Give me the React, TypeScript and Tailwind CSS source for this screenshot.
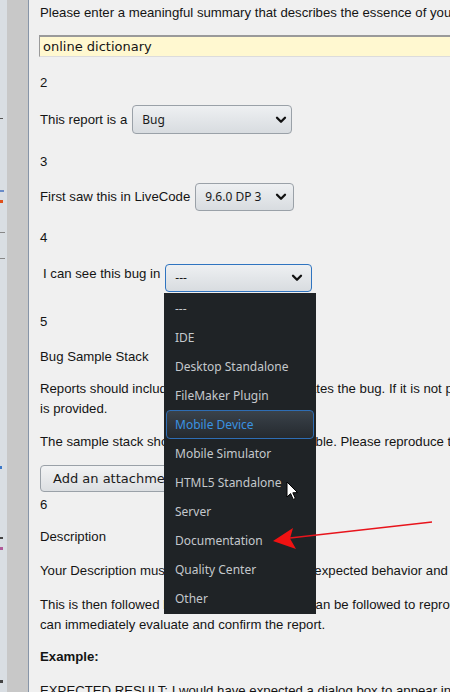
import clsx from 'clsx'

const items = [
  '---',
  'IDE',
  'Desktop Standalone',
  'FileMaker Plugin',
  'Mobile Device',
  'Mobile Simulator',
  'HTML5 Standalone',
  'Server',
  'Documentation',
  'Quality Center',
  'Other',
]

function Chevron() {
  return (
    <svg width="12" height="8" viewBox="0 0 12 8" className="shrink-0">
      <path d="M2 1.8 L6 5.8 L10 1.8" fill="none" stroke="#111" strokeWidth="2.3" strokeLinecap="round" strokeLinejoin="round" />
    </svg>
  )
}

function Select({ value, className, focused }: { value: string; className: string; focused?: boolean }) {
  return (
    <div
      className={clsx(
        'flex shrink-0 items-center justify-between rounded-[4px] border bg-gradient-to-b from-[#eef0f2] to-[#d8dce0] pl-[9px] font-["Noto_Sans",sans-serif] text-[12px] text-[#1a1a1a]',
        focused ? 'border-[#2f74c0]' : 'border-[#9aa1a8]',
        className,
      )}
    >
      <span>{value}</span>
      <Chevron />
    </div>
  )
}

export default function App() {
  return (
    <div className="relative flex h-[692px] w-[450px] overflow-hidden bg-[#f0f0f0]">
      {/* window behind */}
      <div className="relative w-[7px] shrink-0 bg-[#d9dee3]">
        <div className="absolute left-0 top-[118px] h-px w-[3px] bg-[#555]" />
        <div className="absolute left-0 top-[190px] h-[2px] w-[4px] bg-[#6a8cc8]" />
        <div className="absolute left-0 top-[200px] h-[3px] w-[3px] bg-[#e0501a]" />
        <div className="absolute left-0 top-[232px] h-px w-[5px] bg-[#888]" />
        <div className="absolute left-0 top-[258px] h-px w-[5px] bg-[#888]" />
        <div className="absolute left-0 top-[466px] h-[3px] w-[2px] bg-[#3c78c8]" />
        <div className="absolute left-0 top-[537px] h-[2px] w-[3px] bg-[#444]" />
        <div className="absolute left-0 top-[547px] h-[3px] w-[3px] bg-[#b05a9a]" />
        <div className="absolute left-0 top-[680px] h-[3px] w-[3px] bg-[#444]" />
      </div>
      <div className="w-[21px] shrink-0 bg-[#c8c8c8]" />
      <div className="w-px shrink-0 bg-[#8795a8]" />

      <div className='flex min-w-0 flex-1 flex-col pl-[11px] font-["Liberation_Sans",Arial,sans-serif] text-[13.2px] leading-[20px] text-[#141414]'>
        <p className="mt-[3px] whitespace-nowrap">Please enter a meaningful summary that describes the essence of your report.</p>
        <div className='-ml-px mt-[12px] flex h-[22px] w-[560px] shrink-0 items-center border-t-2 border-l border-b border-[#9a9a9a] border-b-[#dcdcdc] bg-[#fff8d0] pl-[3px] font-["DejaVu_Sans",sans-serif] text-[13px]'>
          online dictionary
        </div>
        <p className="mt-[16px]">2</p>
        <div className="mt-[12px] flex items-center gap-[5px] whitespace-nowrap">
          <span>This report is a</span>
          <Select value="Bug" className="h-[29px] w-[160px] pr-[4px]" />
        </div>
        <p className="mt-[18px]">3</p>
        <div className="mt-[11px] flex items-center gap-[5px] whitespace-nowrap">
          <span>First saw this in LiveCode</span>
          <Select value="9.6.0 DP 3" className="h-[28px] w-[99px] pr-[6px]" />
        </div>
        <p className="mt-[17px]">4</p>
        <div className="mt-[16px] flex items-start gap-[5px] whitespace-nowrap pl-[3px]">
          <span>I can see this bug in</span>
          <Select value="---" focused className="h-[28px] w-[147px] pr-[8px]" />
        </div>
        <p className="mt-[20px]">5</p>
        <p className="mt-[15px]">Bug Sample Stack</p>
        <p className="mt-[12px] whitespace-nowrap">
          Reports should include a recipe that demonstrates the bug. If it is not possible to provide one, please explain why no stack
          <br />
          is provided.
        </p>
        <p className="mt-[13px] whitespace-nowrap">The sample stack should be as simple as possible. Please reproduce the bug in a new stack.</p>
        <div className='mt-[13px] flex h-[27px] w-[150px] shrink-0 items-center rounded-[4px] border border-[#9aa1a8] bg-gradient-to-b from-[#f2f3f4] to-[#dcdfe2] pl-[12px] font-["DejaVu_Sans",sans-serif] text-[13px] text-[#1a1a1a]'>
          Add an attachment
        </div>
        <p className="mt-[3px]">6</p>
        <p className="mt-[12px]">Description</p>
        <p className="mt-[14px] whitespace-nowrap">Your Description must start with describing the expected behavior and the actual behavior.</p>
        <p className="mt-[14px] whitespace-nowrap">
          This is then followed by a list of the steps that can be followed to reproduce the bug so that the team
          <br />
          can immediately evaluate and confirm the report.
        </p>
        <p className="mt-[12px] font-bold">Example:</p>
        <p className="mt-[14px] whitespace-nowrap">EXPECTED RESULT: I would have expected a dialog box to appear in the centre of the screen.</p>
      </div>

      {/* open select popup */}
      <div className='absolute left-[164px] top-[293px] flex h-[321px] w-[152px] flex-col bg-[#1f2326] pt-[1px] font-["Noto_Sans",sans-serif] text-[12px] text-[#c4c8cc]'>
        {items.map((it, i) =>
          i === 4 ? (
            <div
              key={it}
              className="mx-[2px] flex h-[29px] shrink-0 items-center rounded-[4px] border border-[#2e6db4] bg-gradient-to-b from-[#3a424a] to-[#252a2f] pl-[8px] text-[#3a92e0]"
            >
              {it}
            </div>
          ) : (
            <div key={it} className="flex h-[29px] shrink-0 items-center pl-[11px]">
              {it}
            </div>
          ),
        )}
      </div>

      {/* annotation arrow + mouse pointer */}
      <svg className="pointer-events-none absolute left-0 top-0" width="450" height="692">
        <line x1="432" y1="522" x2="290" y2="538" stroke="#e8141c" strokeWidth="1.3" />
        <polygon points="273,541 293,528 290,538.5 296,549" fill="#f01212" />
        <path
          d="M287 482 L287 497 L290.6 493.6 L293.2 499.4 L295.4 498.4 L292.8 492.8 L297.6 492.6 Z"
          fill="#fff"
          stroke="#000"
          strokeWidth="1"
          strokeLinejoin="round"
        />
      </svg>
    </div>
  )
}
